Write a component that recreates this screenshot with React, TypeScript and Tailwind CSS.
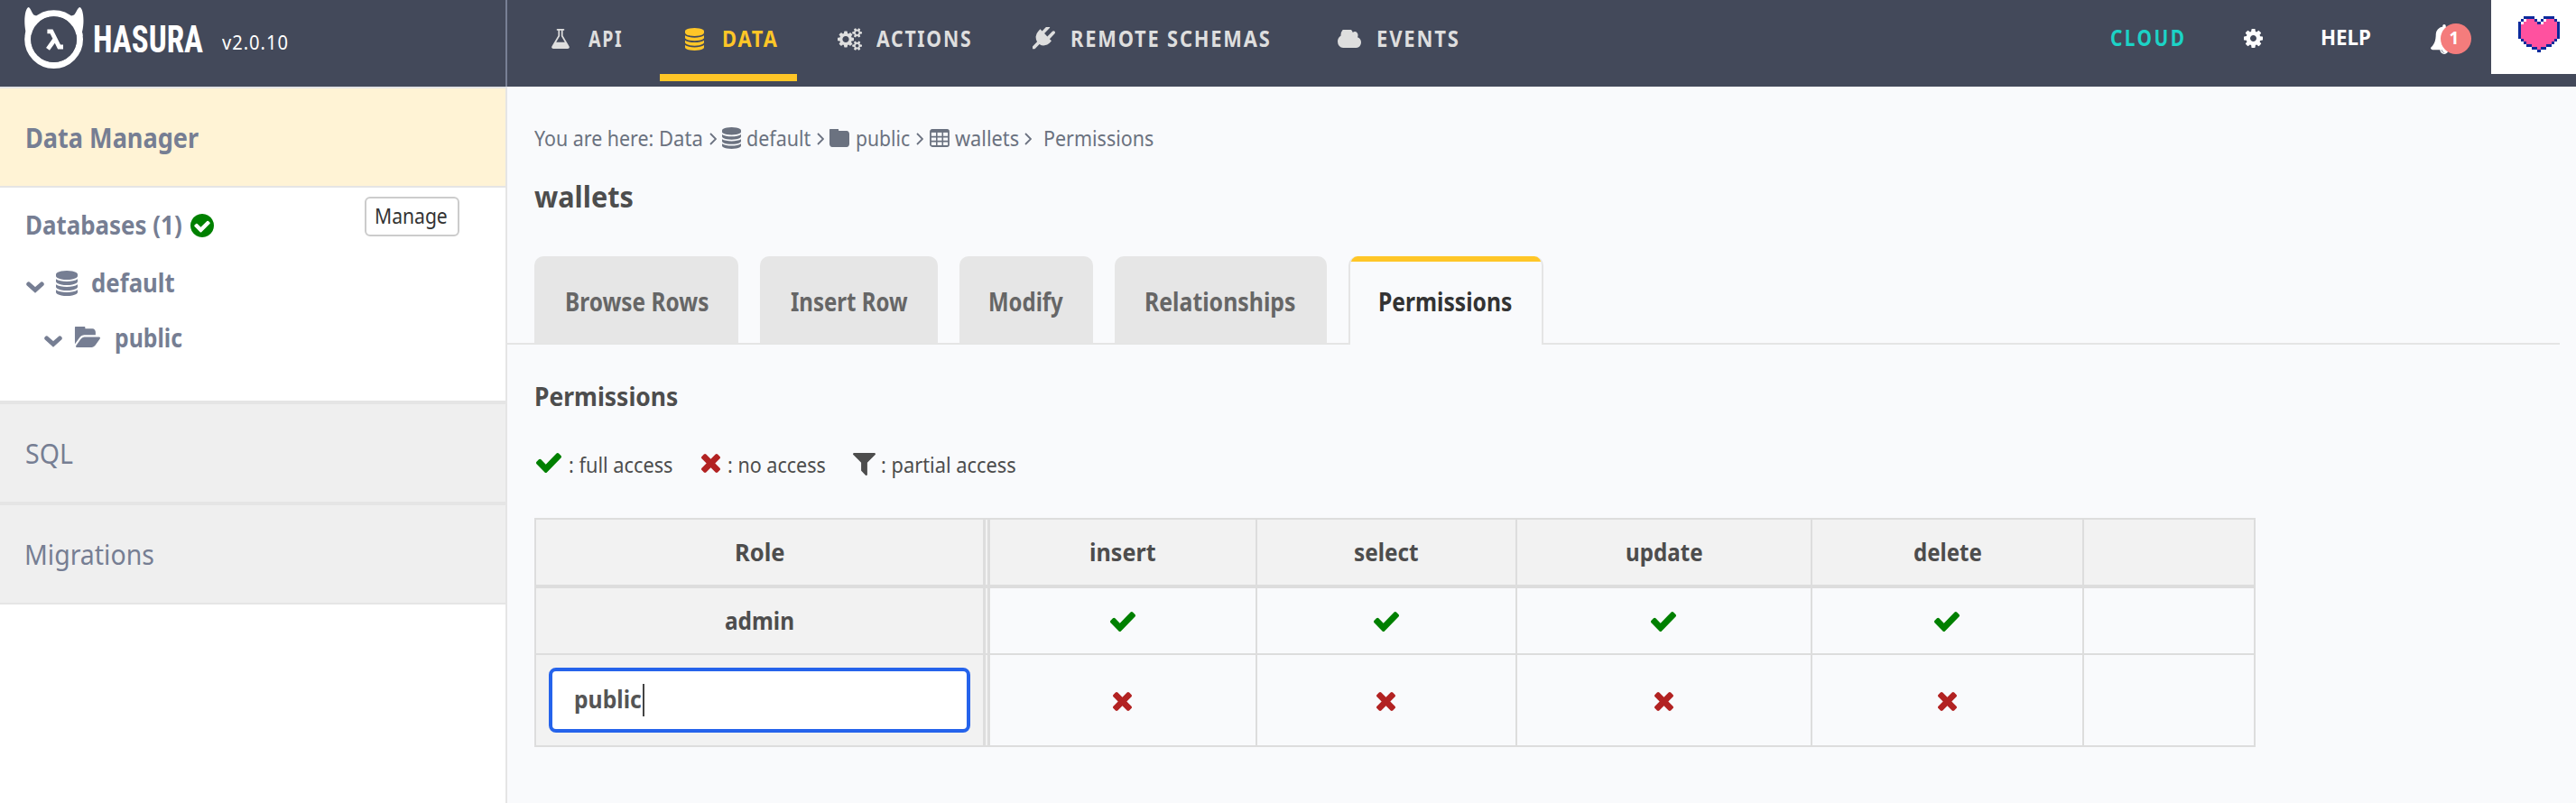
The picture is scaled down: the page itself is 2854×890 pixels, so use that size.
import React from "react";

type IconProps = { className?: string };

type TextProps = { className: string; scale?: string; children: React.ReactNode };

/* Narrowed humanist lettering: the outer span reserves the set width, the inner one is condensed. */
function Text({ className, scale = "", children }: TextProps) {
  return (
    <span className={`inline-block shrink-0 whitespace-nowrap ${className}`}>
      <span className={`inline-block origin-left ${scale}`}>{children}</span>
    </span>
  );
}

function Glyph({ box, d, className = "" }: { box: string; d: string; className?: string }) {
  return (
    <svg viewBox={box} preserveAspectRatio="none" fill="currentColor" className={`block shrink-0 ${className}`}>
      <path d={d} fillRule="evenodd" />
    </svg>
  );
}

const CHECK =
  "M1671 566q0 40-28 68l-724 724-136 136q-28 28-68 28t-68-28l-136-136-362-362q-28-28-28-68t28-68l136-136q28-28 68-28t68 28l294 295 656-657q28-28 68-28t68 28l136 136q28 28 28 68z";
const TIMES =
  "M1490 1322q0 40-28 68l-136 136q-28 28-68 28t-68-28l-294-294-294 294q-28 28-68 28t-68-28l-136-136q-28-28-28-68t28-68l294-294-294-294q-28-28-28-68t28-68l136-136q28-28 68-28t68 28l294 294 294-294q28-28 68-28t68 28l136 136q28 28 28 68t-28 68l-294 294 294 294q28 28 28 68z";
const FILTER =
  "M1595 295q17 41-14 70l-493 493v742q0 42-39 59-13 5-25 5-27 0-45-19l-256-256q-19-19-19-45v-486l-493-493q-31-29-14-70 17-39 59-39h1280q42 0 59 39z";
const DATABASE =
  "M896 768q237 0 443-43t325-127v170q0 69-103 128t-280 93.5-385 34.5-385-34.5-280-93.5-103-128v-170q119 84 325 127t443 43zm0 768q237 0 443-43t325-127v170q0 69-103 128t-280 93.5-385 34.5-385-34.5-280-93.5-103-128v-170q119 84 325 127t443 43zm0-384q237 0 443-43t325-127v170q0 69-103 128t-280 93.5-385 34.5-385-34.5-280-93.5-103-128v-170q119 84 325 127t443 43zm0-1152q208 0 385 34.5t280 93.5 103 128v128q0 69-103 128t-280 93.5-385 34.5-385-34.5-280-93.5-103-128v-128q0-69 103-128t280-93.5 385-34.5z";
const FLASK =
  "M1591 1448q56 89 21.5 152.5t-140.5 63.5h-1152q-106 0-140.5-63.5t21.5-152.5l503-793v-399h-64q-26 0-45-19t-19-45 19-45 45-19h512q26 0 45 19t19 45-19 45-45 19h-64v399zm-779-725l-272 429h712l-272-429-20-31v-436h-128v436z";
const CLOUD =
  "M1984 1152q0 159-112.5 271.5t-271.5 112.5h-1088q-185 0-316.5-131.5t-131.5-316.5q0-132 71-241.5t187-163.5q-2-28-2-43 0-212 150-362t362-150q158 0 286.5 88t187.5 230q70-62 166-62 106 0 181 75t75 181q0 75-41 138 129 30 213 134.5t84 239.5z";
const COG =
  "M1152 896q0-106-75-181t-181-75-181 75-75 181 75 181 181 75 181-75 75-181zm512-109v222q0 12-8 23t-20 13l-185 28q-19 54-39 91 35 50 107 138 10 12 10 25t-9 23q-27 37-99 108t-94 71q-12 0-26-9l-138-108q-44 23-91 38-16 136-29 186-7 28-36 28h-222q-14 0-24.5-8.5t-11.5-21.5l-28-184q-49-16-90-37l-141 107q-10 9-25 9-14 0-25-11-126-114-165-168-7-10-7-23 0-12 8-23 15-21 51-66.5t54-70.5q-27-50-41-99l-183-27q-13-2-21-12.5t-8-23.5v-222q0-12 8-23t19-13l186-28q14-46 39-92-40-57-107-138-10-12-10-24 0-10 9-23 26-36 98.5-107.5t94.5-71.5q13 0 26 10l138 107q44-23 91-38 16-136 29-186 7-28 36-28h222q14 0 24.5 8.5t11.5 21.5l28 184q49 16 90 37l142-107q9-9 24-9 13 0 25 10 129 119 165 170 7 8 7 22 0 12-8 23-15 21-51 66.5t-54 70.5q26 50 41 98l183 28q13 2 21 12.5t8 23.5z";
const COGS =
  "M896 896q0-106-75-181t-181-75-181 75-75 181 75 181 181 75 181-75 75-181zm768 512q0-52-38-90t-90-38-90 38-38 90q0 53 37.5 90.5t90.5 37.5 90.5-37.5 37.5-90.5zm0-1024q0-52-38-90t-90-38-90 38-38 90q0 53 37.5 90.5t90.5 37.5 90.5-37.5 37.5-90.5zm-384 421v185q0 10-7 19.5t-16 10.5l-155 24q-11 35-32 76 34 48 90 115 7 11 7 20 0 12-7 19-23 30-82.5 89.5t-78.5 59.5q-11 0-21-7l-115-90q-37 19-77 31-11 108-23 155-7 24-30 24h-186q-11 0-20-7.5t-10-17.5l-23-153q-34-10-75-31l-118 89q-7 7-20 7-11 0-21-8-144-133-144-160 0-9 7-19 10-14 41-53t47-61q-23-44-35-82l-152-24q-10-1-17-9.5t-7-19.5v-185q0-10 7-19.5t16-10.5l155-24q11-35 32-76-34-48-90-115-7-11-7-20 0-12 7-20 22-30 82-89t79-59q11 0 21 7l115 90q34-18 77-32 11-108 23-154 7-24 30-24h186q11 0 20 7.5t10 17.5l23 153q34 10 75 31l118-89q8-7 20-7 11 0 21 8 144 133 144 160 0 8-7 19-12 16-42 54t-45 60q23 48 34 82l152 23q10 2 17 10.5t7 19.5zm640 533v140q0 16-149 31-12 27-30 52 51 113 51 138 0 4-4 7-122 71-124 71-8 0-46-47t-52-68q-20 2-30 2t-30-2q-14 21-52 68t-46 47q-2 0-124-71-4-3-4-7 0-25 51-138-18-25-30-52-149-15-149-31v-140q0-16 149-31 13-29 30-52-51-113-51-138 0-4 4-7 4-2 35-20t59-34 30-16q8 0 46 46.5t52 67.5q20-2 30-2t30 2q51-71 92-112l6-2q4 0 124 70 4 3 4 7 0 25-51 138 17 23 30 52 149 15 149 31zm0-1024v140q0 16-149 31-12 27-30 52 51 113 51 138 0 4-4 7-122 71-124 71-8 0-46-47t-52-68q-20 2-30 2t-30-2q-14 21-52 68t-46 47q-2 0-124-71-4-3-4-7 0-25 51-138-18-25-30-52-149-15-149-31v-140q0-16 149-31 13-29 30-52-51-113-51-138 0-4 4-7 4-2 35-20t59-34 30-16q8 0 46 46.5t52 67.5q20-2 30-2t30 2q51-71 92-112l6-2q4 0 124 70 4 3 4 7 0 25-51 138 17 23 30 52 149 15 149 31z";
const PLUG =
  "M1755 453q37 38 37 90.5t-37 90.5l-401 400 150 150-160 160q-163 163-389.5 186.5t-411.5-100.5l-362 362h-181v-181l362-362q-124-185-100.5-411.5t186.5-389.5l160-160 150 150 400-401q38-37 91-37t90 37 37 90.5-37 90.5l-400 401 234 234 401-400q38-37 91-37t90 37z";
const BELL =
  "M912 1696q0-16-16-16-59 0-101.5-42.5t-42.5-101.5q0-16-16-16t-16 16q0 73 51.5 124.5t124.5 51.5q16 0 16-16zm816-288q0 52-38 90t-90 38h-448q0 106-75 181t-181 75-181-75-75-181h-448q-52 0-90-38t-38-90q50-42 91-88t85-119.5 74.5-158.5 50-206 19.5-260q0-152 117-282.5t307-158.5q-8-19-8-39 0-40 28-68t68-28 68 28 28 68q0 20-8 39 190 28 307 158.5t117 282.5q0 139 19.5 260t50 206 74.5 158.5 85 119.5 91 88z";
const FOLDER =
  "M1728 608v704q0 92-66 158t-158 66h-1216q-92 0-158-66t-66-158v-960q0-92 66-158t158-66h320q92 0 158 66t66 158v32h672q92 0 158 66t66 158z";
const FOLDER_OPEN =
  "M1943 952q0 31-31 66l-336 396q-43 51-120.5 86.5t-143.5 35.5h-1088q-34 0-60.5-13t-26.5-43q0-31 31-66l336-396q43-51 120.5-86.5t143.5-35.5h1088q34 0 60.5 13t26.5 43zm-343-344v160h-832q-94 0-197 47.5t-164 119.5l-337 396-5 6q0-4-.5-12.5t-.5-12.5v-960q0-92 66-158t158-66h320q92 0 158 66t66 158v32h544q92 0 158 66t66 158z";
const CHECK_CIRCLE =
  "M1412 734q0-28-18-46l-91-90q-19-19-45-19t-45 19l-408 407-226-226q-19-19-45-19t-45 19l-91 90q-18 18-18 46 0 27 18 45l362 362q19 19 45 19 27 0 46-19l543-543q18-18 18-45zm252 162q0 209-103 385.5t-279.5 279.5-385.5 103-385.5-103-279.5-279.5-103-385.5 103-385.5 279.5-279.5 385.5-103 385.5 103 279.5 279.5 103 385.5z";

const CheckIcon = ({ className = "" }: IconProps) => (
  <Glyph box="121 334 1550 1188" d={CHECK} className={`h-[22px] w-7 text-[#008000] ${className}`} />
);
const TimesIcon = ({ className = "" }: IconProps) => (
  <Glyph box="302 366 1188 1188" d={TIMES} className={`h-[21px] w-[21px] text-[#b22222] ${className}`} />
);
const DatabaseIcon = ({ className = "" }: IconProps) => (
  <Glyph box="128 0 1536 1792" d={DATABASE} className={className} />
);

function TableIcon({ className = "" }: IconProps) {
  return (
    <svg viewBox="0 0 22 20" fill="none" stroke="currentColor" className={`block shrink-0 ${className}`}>
      <rect x="1" y="1" width="20" height="18" rx="1.8" strokeWidth="1.8" />
      <path d="M1 2.4H21" strokeWidth="3" />
      <path d="M1 8.6H21M1 13.6H21M7.8 3V19M14.3 3V19" strokeWidth="1.6" />
    </svg>
  );
}

function Angle({ className = "" }: IconProps) {
  return (
    <svg viewBox="0 0 8 14" fill="none" stroke="currentColor" strokeWidth="1.8" className={`block h-3.5 w-2 shrink-0 ${className}`}>
      <path d="M1 1L7 7L1 13" />
    </svg>
  );
}

function Chevron({ className = "" }: IconProps) {
  return (
    <svg viewBox="0 0 20 13" fill="none" stroke="currentColor" strokeWidth="5" className={`block h-[13px] w-5 shrink-0 ${className}`}>
      <path d="M2.8 3L10 9.4L17.2 3" strokeLinecap="round" />
    </svg>
  );
}

function Logo() {
  return (
    <svg viewBox="0 0 66 69" fill="white" className="block h-[69px] w-[66px] shrink-0">
      <circle cx="32.6" cy="35.6" r="28.9" fill="none" stroke="white" strokeWidth="7" />
      <path d="M4.6 0C1.2 1-1.4 14 1.6 27.5L0.8 32L9 30L20 11C15 11 13 9 11 8.7C8.6 8 7 0.4 4.6 0Z" />
      <path d="M61.4 0C64.8 1 67.2 14 64 27.5L64.6 32L56 30L45.5 11C50.5 11 52.5 9 54.5 8.7C57 8 58.6 0.4 61.4 0Z" />
      <circle cx="32.6" cy="35.6" r="25.4" fill="#43495a" />
      <path d="M25.4 26.8H30L38.6 44H43M34.2 35L26 46.4" fill="none" stroke="white" strokeWidth="4.8" />
    </svg>
  );
}

const HEART = [
  "..BBBB...BBBB..",
  ".BWPPPB.BWPPPB.",
  "BWPPPPPBWPPPPPB",
  "BPPPPPPPPPPPPPB",
  "BPPPPPPPPPPPPPB",
  "BPPPPPPPPPPPPPB",
  "BPPPPPPPPPPPPPB",
  "BPPPPPPPPPPPPPB",
  ".BPPPPPPPPPPPB.",
  "..BPPPPPPPPPB..",
  "...BBPPPPPBB...",
  ".....BBPBB.....",
  ".......B.......",
];
const HEART_COLORS: Record<string, string> = { B: "#0b2a9c", P: "#ff519f", W: "#ffffff" };

function PixelHeart() {
  return (
    <svg viewBox="0 0 15 13" preserveAspectRatio="none" shapeRendering="crispEdges" className="block h-10 w-[46px]">
      {HEART.flatMap((row, y) =>
        row.split("").map((c, x) =>
          c === "." ? null : <rect key={`${x}-${y}`} x={x} y={y} width="1" height="1" fill={HEART_COLORS[c]} />
        )
      )}
    </svg>
  );
}

const NAV = "flex h-[90px] items-center border-b-8 border-transparent pt-1 text-[24.5px] font-bold tracking-[2px] text-[#dedede]";

function Header() {
  return (
    <header className="flex h-24 shrink-0 bg-[#43495a] text-white">
      <div className="flex w-[562px] shrink-0 items-start border-r-2 border-[#788095] pt-2 pl-[27px]">
        <Logo />
        <Text
          className="ml-[10px] mt-[7px] w-[124px] font-['Roboto',sans-serif] text-[43px] leading-[56px] font-bold [font-stretch:75%]"
          scale="scale-x-[.815]"
        >
          HASURA
        </Text>
        <Text className="ml-[19px] mt-[24px] text-[21px] leading-[31px] tracking-[1px]" scale="scale-x-[.96]">
          v2.0.10
        </Text>
      </div>
      <nav className="flex">
        <div className={`${NAV} ml-[21px] w-[148px] pl-7`}>
          <Glyph box="155 128 1482 1536" d={FLASK} className="h-[22px] w-5" />
          <Text className="ml-[21px] mt-px w-9" scale="scale-x-[.8]">API</Text>
        </div>
        <div className="flex h-[90px] w-[152px] items-center border-b-8 border-[#ffc627] pt-1 pl-7 text-[24.5px] font-bold tracking-[2px] text-[#ffc627]">
          <DatabaseIcon className="h-[25px] w-[21px]" />
          <Text className="ml-5 mt-px w-[60px]" scale="scale-x-[.894]">DATA</Text>
        </div>
        <div className={`${NAV} w-[261px] pl-[45px]`}>
          <Glyph box="0 0 1920 1792" d={COGS} className="h-[25px] w-[27px]" />
          <Text className="ml-4 mt-px w-[104px]" scale="scale-x-[.867]">ACTIONS</Text>
        </div>
        <div className={`${NAV} w-[338px]`}>
          <Glyph box="0 128 1792 1792" d={PLUG} className="h-[26px] w-[25px]" />
          <Text className="ml-[17px] mt-px w-[221px]" scale="scale-x-[.894]">REMOTE SCHEMAS</Text>
        </div>
        <div className={NAV}>
          <Glyph box="64 256 1920 1280" d={CLOUD} className="h-5 w-[26px]" />
          <Text className="ml-[17px] mt-px w-[91px]" scale="scale-x-[.9]">EVENTS</Text>
        </div>
      </nav>
      <div className="ml-auto flex h-[82px] items-center font-bold">
        <Text className="mt-0.5 w-[82px] text-[25px] tracking-[3px] text-[#1cd3c6]" scale="scale-x-[.833]">CLOUD</Text>
        <Glyph box="128 128 1536 1536" d={COG} className="ml-[66px] mt-0.5 h-[21px] w-[21px]" />
        <Text className="ml-16 w-[55px] text-[24px]" scale="scale-x-[.93]">HELP</Text>
        <div className="relative ml-[67px] mt-1 h-[33px] w-[30px]">
          <Glyph box="64 0 1664 1792" d={BELL} className="h-[33px] w-[30px]" />
          <span className="absolute top-[-1px] left-[11px] flex h-[34px] w-[34px] items-center justify-center rounded-full bg-[#f47c7c] pr-1 text-[19px]">
            1
          </span>
        </div>
        <div className="ml-[37px] flex h-[82px] w-[94px] justify-center self-start bg-white pt-[18px] pl-[12px]">
          <PixelHeart />
        </div>
      </div>
    </header>
  );
}

function Sidebar() {
  return (
    <aside className="flex w-[562px] shrink-0 flex-col border-r-2 border-[#e5e5e5] bg-white text-[#767e93]">
      <div className="flex h-28 items-center border-y-2 border-[#e5e5e5] bg-[#fff3d5] pl-[28px] text-[31px] font-bold">
        <Text className="w-[192px]" scale="scale-x-[.874]">Data Manager</Text>
      </div>
      <div className="flex h-[236px] flex-col font-bold">
        <div className="flex h-[82px] items-center pl-[28px] text-[29px]">
          <Text className="w-[174px]" scale="scale-x-[.893]">Databases (1)</Text>
          <Glyph box="128 128 1536 1536" d={CHECK_CIRCLE} className="mt-0.5 ml-[9px] h-[26px] w-[26px] text-[#008000]" />
          <button className="ml-[167px] mt-2.5 flex h-11 w-[105px] items-center self-start rounded-md border-2 border-[#ccc] bg-white pb-0.5 pl-[9px] text-[23px] font-normal text-[#333]">
            <Text className="w-[80px]" scale="scale-x-[.918]">Manage</Text>
          </button>
        </div>
        <div className="flex h-[46px] items-center pl-[29px] text-[28px]">
          <Chevron className="mt-2.5" />
          <DatabaseIcon className="ml-[13px] mt-0.5 h-7 w-6" />
          <Text className="ml-[15px] w-[94px]" scale="scale-x-[.92]">default</Text>
        </div>
        <div className="flex h-[74px] items-center pl-[49px] text-[28px]">
          <Chevron className="mt-2.5" />
          <Glyph box="0 256 1943 1280" d={FOLDER_OPEN} className="ml-[13px] h-[23px] w-[29px]" />
          <Text className="ml-[16px] mt-0.5 w-[76px]" scale="scale-x-[.885]">public</Text>
        </div>
      </div>
      <div className="flex h-28 items-center border-t-4 border-[#e5e5e5] bg-[#efefef] pl-[28px] text-[31px]">
        <Text className="w-[54px]" scale="scale-x-[.92]">SQL</Text>
      </div>
      <div className="flex h-[114px] items-center border-t-4 border-b-2 border-[#e5e5e5] bg-[#efefef] pl-[27px] text-[31px]">
        <Text className="w-[144px]" scale="scale-x-[.918]">Migrations</Text>
      </div>
    </aside>
  );
}

function Breadcrumb() {
  return (
    <div className="flex h-[38px] items-center pl-[30px] text-[23px] text-[#6b7280]">
      <Text className="w-[132px]" scale="scale-x-[.93]">You are here:</Text>
      <Text className="ml-1.5 w-12" scale="scale-x-[.958]">Data</Text>
      <Angle className="ml-2 mt-0.5" />
      <DatabaseIcon className="ml-1.5 h-6 w-[21px]" />
      <Text className="ml-1.5 w-[71px]" scale="scale-x-[.933]">default</Text>
      <Angle className="ml-[7px] mt-0.5" />
      <Glyph box="64 256 1664 1280" d={FOLDER} className="ml-1.5 h-5 w-[22px]" />
      <Text className="ml-[7px] w-[61px]" scale="scale-x-[.92]">public</Text>
      <Angle className="ml-[6px] mt-0.5" />
      <TableIcon className="ml-[7px] h-5 w-[22px]" />
      <Text className="ml-1.5 w-[71px]" scale="scale-x-[.946]">wallets</Text>
      <Angle className="ml-1.5 mt-0.5" />
      <Text className="ml-[13px]" scale="scale-x-[.934]">Permissions</Text>
    </div>
  );
}

const TAB = "flex h-24 shrink-0 items-center justify-center rounded-t-[10px] bg-[#e6e6e6] pt-[3px] text-[#666]";

function Tabs() {
  return (
    <div className="mt-5 mr-[18px] flex h-[98px] border-b-2 border-[#e5e5e5] pl-[30px] text-[28px] font-bold">
      <div className={`${TAB} w-[226px]`}>
        <Text className="w-[159px]" scale="scale-x-[.872]">Browse Rows</Text>
      </div>
      <div className={`${TAB} ml-6 w-[197px]`}>
        <Text className="w-[129px]" scale="scale-x-[.858]">Insert Row</Text>
      </div>
      <div className={`${TAB} ml-6 w-[148px]`}>
        <Text className="w-[84px]" scale="scale-x-[.855]">Modify</Text>
      </div>
      <div className={`${TAB} ml-6 w-[235px]`}>
        <Text className="w-[169px]" scale="scale-x-[.887]">Relationships</Text>
      </div>
      <div className="ml-6 flex h-[98px] w-[216px] shrink-0 flex-col overflow-hidden rounded-t-[10px] border-x-2 border-[#e5e5e5] bg-[#f9fafc] text-[#333]">
        <div className="h-1.5 shrink-0 bg-[#ffc627]" />
        <div className="flex flex-1 items-center justify-center pb-[5px]">
          <Text className="w-[150px]" scale="scale-x-[.88]">Permissions</Text>
        </div>
      </div>
    </div>
  );
}

const HEAD_ROW = "flex h-[76px] border-b-4 border-[#ddd] bg-[#f2f2f2]";
const ROLE_CELL = "flex w-[503px] shrink-0 items-center justify-center border-r-8 border-double border-[#ddd] bg-[#f2f2f2]";
const CELL = "flex shrink-0 items-center justify-center border-r-2 border-[#ddd]";
const WIDTHS = ["w-[296px]", "w-[288px]", "w-[327px]", "w-[301px]"];

function PermissionsTable() {
  return (
    <div className="mt-10 ml-[30px] w-[1907px] border-t-2 border-l-2 border-[#ddd] text-[27px] font-bold">
      <div className={HEAD_ROW}>
        <div className={ROLE_CELL}>
          <Text className="w-[55px]" scale="scale-x-[.946]">Role</Text>
        </div>
        <div className={`${CELL} w-[296px]`}>
          <Text className="w-[74px]" scale="scale-x-[.93]">insert</Text>
        </div>
        <div className={`${CELL} w-[288px]`}>
          <Text className="w-[72px]" scale="scale-x-[.9]">select</Text>
        </div>
        <div className={`${CELL} w-[327px]`}>
          <Text className="w-[86px]" scale="scale-x-[.894]">update</Text>
        </div>
        <div className={`${CELL} w-[301px]`}>
          <Text className="w-[76px]" scale="scale-x-[.89]">delete</Text>
        </div>
        <div className={`${CELL} w-[190px]`} />
      </div>
      <div className="flex h-[74px] border-b-2 border-[#ddd]">
        <div className={ROLE_CELL}>
          <Text className="w-[78px]" scale="scale-x-[.904]">admin</Text>
        </div>
        {WIDTHS.map((w) => (
          <div key={w} className={`${CELL} pr-px ${w}`}>
            <CheckIcon className="mt-0.5" />
          </div>
        ))}
        <div className={`${CELL} w-[190px]`} />
      </div>
      <div className="flex h-[102px] border-b-2 border-[#ddd]">
        <div className="flex w-[503px] shrink-0 items-center border-r-8 border-double border-[#ddd] bg-[#f2f2f2] pl-3.5">
          <div className="flex h-[72px] w-[467px] items-center rounded-lg border-4 border-[#2563eb] bg-white pb-0.5 pl-6 text-[#555]">
            <Text className="w-[76px]" scale="scale-x-[.915]">public</Text>
            <span className="mt-px h-9 w-0.5 bg-[#444]" />
          </div>
        </div>
        {WIDTHS.map((w) => (
          <div key={w} className={`${CELL} pr-px ${w}`}>
            <TimesIcon className="mt-0.5" />
          </div>
        ))}
        <div className={`${CELL} w-[190px]`} />
      </div>
    </div>
  );
}

export default function App() {
  return (
    <div className="flex h-[890px] w-[2854px] flex-col overflow-hidden bg-[#f9fafc] font-['Noto_Sans',sans-serif]">
      <Header />
      <div className="flex min-h-0 flex-1">
        <Sidebar />
        <main className="flex flex-1 flex-col pt-[38px] text-[#4d4d4d]">
          <Breadcrumb />
          <h2 className="flex h-[92px] items-center pl-[30px] text-[32px] font-bold">
            <Text className="w-[110px]" scale="scale-x-[.958]">wallets</Text>
          </h2>
          <Tabs />
          <h4 className="flex h-[114px] items-center pl-[29.5px] text-[29px] font-bold">
            <Text className="w-[160px]" scale="scale-x-[.913]">Permissions</Text>
          </h4>
          <div className="flex h-[38px] items-center pl-8 text-[23px]">
            <CheckIcon className="mb-1" />
            <Text className="ml-2 w-[116px]" scale="scale-x-[.946]">: full access</Text>
            <TimesIcon className="mb-1 ml-[31px]" />
            <Text className="ml-2 w-[110px]" scale="scale-x-[.937]">: no access</Text>
            <Glyph box="190 256 1412 1410" d={FILTER} className="mb-0.5 ml-[29px] h-[25px] w-[25px]" />
            <Text className="ml-1.5" scale="scale-x-[.949]">: partial access</Text>
          </div>
          <PermissionsTable />
        </main>
      </div>
    </div>
  );
}
